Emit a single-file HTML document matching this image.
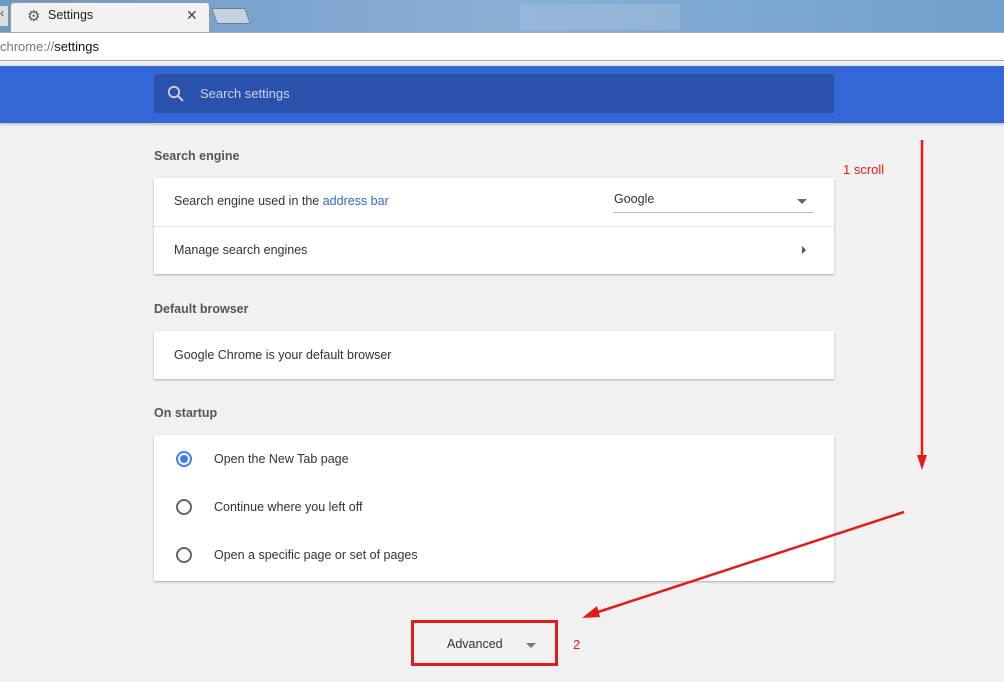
<!DOCTYPE html>
<html><head><style>
*{margin:0;padding:0;box-sizing:border-box}
body{width:1004px;height:682px;overflow:hidden;background:#f1f1f1;font-family:"Liberation Sans",sans-serif;position:relative;font-size:13px;color:#333}
.abs{position:absolute}
.card{position:absolute;left:154px;width:680px;background:#fff;box-shadow:0 1px 2px rgba(0,0,0,.3)}
.h{position:absolute;left:154px;font-size:12.5px;color:#555;font-weight:bold}
.row{position:absolute;left:20px;font-size:12.5px;color:#333}
.radio{position:absolute;left:22px;width:16px;height:16px;border:2px solid #666;border-radius:50%}
</style></head><body>
<div class="abs" style="left:0;top:0;width:1004px;height:32px;background:linear-gradient(90deg,#6c98c4,#8ab0d6 50%,#6f9fcc)"></div>
<div class="abs" style="left:520px;top:4px;width:160px;height:26px;background:#9dbcdc;opacity:.6"></div>
<div class="abs" style="left:10px;top:2px;width:200px;height:31px;background:#f2f2f2;border:1px solid #999;border-bottom:none;border-radius:4px 4px 0 0"></div>
<div class="abs" style="left:0;top:6px;width:8px;height:20px;background:#ddd;font-size:12px;color:#444">‹</div>
<div class="abs" style="left:27px;top:7px;font-size:15px;color:#555">⚙</div>
<div class="abs" style="left:48px;top:8px;font-size:12.5px;color:#222">Settings</div>
<div class="abs" style="left:186px;top:7px;font-size:14px;color:#444">✕</div>
<div class="abs" style="left:214px;top:8px;width:34px;height:16px;background:#c5d3e0;border:1px solid #6d7f92;transform:skewX(20deg)"></div>
<div class="abs" style="left:0;top:32px;width:1004px;height:29px;background:#fff;border-top:1px solid #aaa;border-bottom:1px solid #aaa"></div>
<div class="abs" style="left:0;top:39px;font-size:13px;color:#777">chrome://<span style="color:#111">settings</span></div>
<div class="abs" style="left:0;top:61px;width:1004px;height:5px;background:#f1f1f1"></div>
<div class="abs" style="left:0;top:66px;width:1004px;height:57px;background:#3367d6;box-shadow:0 1px 3px rgba(0,0,0,.3)"></div>
<div class="abs" style="left:154px;top:74px;width:680px;height:39px;background:#2a51ac;border-radius:2px"></div>
<svg class="abs" style="left:166px;top:84px" width="20" height="20"><circle cx="8" cy="8" r="5.2" stroke="#c8d4f0" stroke-width="1.8" fill="none"/><line x1="12" y1="12" x2="17" y2="17" stroke="#c8d4f0" stroke-width="2"/></svg>
<div class="abs" style="left:200px;top:86px;font-size:13px;color:#c8d4f0">Search settings</div>
<div class="abs" style="left:154px;top:123px;width:680px;height:2px;background:#ccc"></div>

<div class="h" style="top:149px">Search engine</div>
<div class="card" style="top:178px;height:96px">
<div class="row" style="top:16px">Search engine used in the <span style="color:#3367d6">address bar</span></div>
<div class="abs" style="left:460px;top:14px;width:200px;height:21px;border-bottom:1px solid #bbb;font-size:12.5px">Google</div>
<div class="abs" style="left:643px;top:21px;border-left:5px solid transparent;border-right:5px solid transparent;border-top:5px solid #666"></div>
<div class="abs" style="left:0;top:48px;width:680px;height:1px;background:#e4e4e4"></div>
<div class="row" style="top:65px">Manage search engines</div>
<div class="abs" style="left:648px;top:68px;border-top:4px solid transparent;border-bottom:4px solid transparent;border-left:4px solid #555"></div>
</div>

<div class="h" style="top:302px">Default browser</div>
<div class="card" style="top:331px;height:48px"><div class="row" style="top:17px">Google Chrome is your default browser</div></div>

<div class="h" style="top:406px">On startup</div>
<div class="card" style="top:435px;height:146px">
<div class="radio" style="top:16px;border-color:#3f7fe8"><div style="margin:2px;width:8px;height:8px;border-radius:50%;background:#3f7fe8"></div></div>
<div class="row" style="left:60px;top:17px">Open the New Tab page</div>
<div class="radio" style="top:64px"></div>
<div class="row" style="left:60px;top:65px">Continue where you left off</div>
<div class="radio" style="top:112px"></div>
<div class="row" style="left:60px;top:113px">Open a specific page or set of pages</div>
</div>

<div class="abs" style="left:447px;top:637px;font-size:12.5px">Advanced</div>
<div class="abs" style="left:526px;top:643px;border-left:5px solid transparent;border-right:5px solid transparent;border-top:5px solid #777"></div>
<div class="abs" style="left:411px;top:620px;width:147px;height:46px;border:3px solid #e31b1b"></div>
<div class="abs" style="left:573px;top:637px;font-size:13px;color:#e31b1b">2</div>
<div class="abs" style="left:843px;top:162px;font-size:13px;color:#e31b1b">1 scroll</div>
<svg class="abs" style="left:0;top:0" width="1004" height="682">
<line x1="922" y1="140" x2="922" y2="458" stroke="#e31b1b" stroke-width="2.5"/>
<polygon points="917,455 927,455 922,470" fill="#e31b1b"/>
<line x1="904" y1="512" x2="595" y2="613" stroke="#e31b1b" stroke-width="2.5"/>
<polygon points="582,618 597,606 600,617" fill="#e31b1b"/>
</svg>
</body></html>
